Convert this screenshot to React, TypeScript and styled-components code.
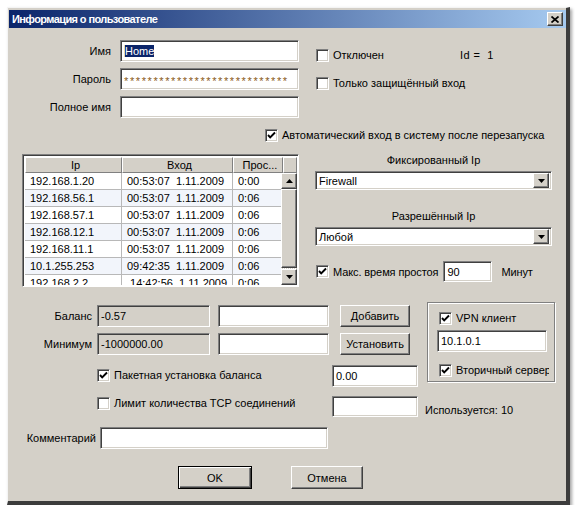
import React from 'react';
import styled, { createGlobalStyle, css } from 'styled-components';

const GlobalStyle = createGlobalStyle`
  html, body {
    margin: 0;
    background: #fff;
    font-family: "Liberation Sans", Arial, sans-serif;
    font-size: 11px;
    color: #000;
  }
`;

const sunken = css`
  box-sizing: border-box;
  border-style: solid;
  border-width: 1px;
  border-color: #808080 #fff #fff #808080;
  box-shadow: inset 1px 1px #404040, inset -1px -1px #d4d0c8;
`;

const raised = css`
  box-sizing: border-box;
  border-style: solid;
  border-width: 1px;
  border-color: #fff #404040 #404040 #fff;
  box-shadow: inset -1px -1px #808080, inset 1px 1px #d4d0c8;
  background: #d4d0c8;
`;

const Window = styled.div`
  box-sizing: border-box;
  margin: 7px 0 0 7px;
  width: 563px;
  height: 498px;
  background: #d4d0c8;
  border-style: solid;
  border-width: 1px 4px 4px 1px;
  border-color: #f4f4f4 #3c3c3c #3c3c3c #f4f4f4;
  padding: 2px 0 0 1px;
  box-shadow: 2px 2px 3px rgba(0, 0, 0, 0.35);
`;

const TitleBar = styled.div`
  height: 18px;
  display: flex;
  align-items: center;
  justify-content: space-between;
  padding: 0 3px;
  background: linear-gradient(to right, #0a246a, #a6caf0);
`;

const Title = styled.span`
  color: #fff;
  font-weight: bold;
  font-size: 11px;
  letter-spacing: -0.6px;
`;

const CloseButton = styled.div`
  ${raised};
  width: 16px;
  height: 14px;
  display: flex;
  align-items: center;
  justify-content: center;
`;

const Content = styled.div`
  padding-top: 12px;
`;

const TopSection = styled.div`
  display: flex;
`;

const FieldColumn = styled.div`
  display: flex;
  flex-direction: column;
  gap: 6px;
  width: 290px;
`;

const FieldRow = styled.div<{ $h?: number }>`
  display: flex;
  align-items: center;
  height: ${(p) => p.$h ?? 22}px;
`;

const FieldLabel = styled.span<{ $w: number; $gap: number }>`
  width: ${(p) => p.$w}px;
  margin-right: ${(p) => p.$gap}px;
  text-align: right;
  white-space: nowrap;
`;

const TextBox = styled.div<{ $w: number; $h?: number; $ro?: boolean; $ml?: number; $mt?: number }>`
  ${sunken};
  width: ${(p) => p.$w}px;
  height: ${(p) => p.$h ?? 22}px;
  margin-left: ${(p) => p.$ml ?? 0}px;
  margin-top: ${(p) => p.$mt ?? 0}px;
  background: ${(p) => (p.$ro ? '#d4d0c8' : '#fff')};
  padding: 0 3px;
  display: flex;
  align-items: center;
  white-space: nowrap;
  overflow: hidden;
  flex: none;
`;

const Selected = styled.span`
  background: #0a246a;
  color: #fff;
  border-left: 1px solid #e8d8a8;
`;

const Stars = styled.span`
  color: #8a5a20;
  letter-spacing: 1.6px;
  margin-top: 3px;
`;

const FlagColumn = styled.div`
  display: flex;
  flex-direction: column;
  gap: 14px;
  margin-left: 17px;
  padding-top: 8px;
`;

const FlagRow = styled.div`
  display: grid;
  grid-template-columns: 144px auto;
  align-items: center;
`;

const IdText = styled.span`
  white-space: pre;
  letter-spacing: 0.4px;
`;

const CheckLine = styled.label<{ $ml?: number; $mt?: number; $w?: number }>`
  display: flex;
  align-items: center;
  gap: 4px;
  height: 14px;
  margin-left: ${(p) => p.$ml ?? 0}px;
  margin-top: ${(p) => p.$mt ?? 0}px;
  white-space: nowrap;
  ${(p) =>
    p.$w !== undefined &&
    css`
      width: ${p.$w}px;
      overflow: hidden;
    `}
`;

const Box = styled.span`
  ${sunken};
  width: 13px;
  height: 13px;
  background: #fff;
  flex: none;
  display: flex;
  align-items: center;
  justify-content: center;
`;

const Check: React.FC<{ label: string; checked?: boolean; ml?: number; mt?: number; w?: number }> = ({
  label,
  checked,
  ml,
  mt,
  w,
}) => (
  <CheckLine $ml={ml} $mt={mt} $w={w}>
    <Box>
      {checked && (
        <svg width="9" height="9" viewBox="0 0 9 9">
          <polyline points="1,4 3.2,6.4 8,1.5" fill="none" stroke="#000" strokeWidth="1.9" />
        </svg>
      )}
    </Box>
    <span>{label}</span>
  </CheckLine>
);

const Middle = styled.div`
  display: flex;
  margin-top: 12px;
`;

const TableBox = styled.div`
  ${sunken};
  margin-left: 13px;
  width: 277px;
  height: 133px;
  background: #fff;
  display: flex;
  flex-direction: column;
  overflow: hidden;
  padding: 2px 1px 1px 2px;
  box-shadow: inset 1px 1px #404040;
`;

const HeadRow = styled.div`
  display: grid;
  grid-template-columns: 97px 111px 50px 1fr;
  height: 16px;
  flex: none;
`;

const HeadCell = styled.div`
  ${raised};
  border-color: #fff #808080 #808080 #fff;
  box-shadow: none;
  display: flex;
  align-items: center;
  justify-content: center;
  padding-left: 4px;
`;

const Body = styled.div`
  display: flex;
  flex: 1;
  min-height: 0;
`;

const Rows = styled.div`
  flex: 1;
  overflow: hidden;
`;

const DataRow = styled.div<{ $alt: boolean }>`
  display: grid;
  grid-template-columns: 97px 111px 50px;
  height: 17px;
  background: ${(p) => (p.$alt ? '#f2f5fb' : '#fff')};
`;

const DataCell = styled.div`
  box-sizing: border-box;
  border-right: 1px solid #b8b8b8;
  border-bottom: 1px solid #b8b8b8;
  padding-left: 5px;
  display: flex;
  align-items: center;
  white-space: pre;
`;

const ScrollBar = styled.div`
  width: 16px;
  display: flex;
  flex-direction: column;
  flex: none;
`;

const ScrollButton = styled.div<{ $h: number }>`
  ${raised};
  height: ${(p) => p.$h}px;
  flex: none;
  display: flex;
  align-items: center;
  justify-content: center;
`;

const ScrollTrack = styled.div`
  flex: 1;
  background: repeating-conic-gradient(#d4d0c8 0 25%, #fff 0 50%) 0 0 / 2px 2px;
`;

const SideColumn = styled.div`
  margin-left: 16px;
  width: 237px;
  display: flex;
  flex-direction: column;
`;

const Caption = styled.div<{ $mt: number }>`
  text-align: center;
  line-height: 13px;
  margin-top: ${(p) => p.$mt}px;
`;

const Combo = styled.div`
  ${sunken};
  margin-top: 4px;
  height: 19px;
  background: #fff;
  display: flex;
  align-items: center;
  padding: 2px;
`;

const ComboText = styled.span`
  flex: 1;
  padding-left: 1px;
`;

const ComboButton = styled.div`
  ${raised};
  width: 16px;
  height: 15px;
  display: flex;
  align-items: center;
  justify-content: center;
`;

const IdleRow = styled.div`
  display: flex;
  align-items: center;
  margin-top: 15px;
  height: 21px;
  letter-spacing: -0.1px;
`;

const Unit = styled.span`
  margin-left: 9px;
`;

const Lower = styled.div`
  display: grid;
  grid-template-columns: 409px 128px;
  column-gap: 9px;
  margin-top: 18px;
`;

const LowerLeft = styled.div`
  display: flex;
  flex-direction: column;
`;

const LowerRow = styled.div<{ $mt?: number; $h?: number; $top?: boolean }>`
  display: flex;
  align-items: ${(p) => (p.$top ? 'flex-start' : 'center')};
  height: ${(p) => p.$h ?? 22}px;
  margin-top: ${(p) => p.$mt ?? 0}px;
`;

const Button = styled.div<{ $w: number; $h?: number; $ml?: number; $default?: boolean }>`
  ${raised};
  width: ${(p) => p.$w}px;
  height: ${(p) => p.$h ?? 22}px;
  margin-left: ${(p) => p.$ml ?? 0}px;
  display: flex;
  align-items: center;
  justify-content: center;
  flex: none;
  ${(p) =>
    p.$default &&
    css`
      border-color: #000;
      box-shadow: inset 1px 1px #fff, inset -1px -1px #404040, inset -2px -2px #808080;
    `}
`;

const Spacer = styled.div`
  flex: 1;
`;

const LowerRight = styled.div`
  display: flex;
  flex-direction: column;
`;

const GroupBox = styled.div`
  box-sizing: border-box;
  margin-top: -3px;
  height: 80px;
  border: 1px solid #808080;
  box-shadow: inset 1px 1px #fff, 1px 1px #fff;
  padding: 8px 6px 0 11px;
  display: flex;
  flex-direction: column;
  overflow: hidden;
`;

const Used = styled.div`
  margin-top: 14px;
  height: 21px;
  padding-top: 8px;
  box-sizing: border-box;
  margin-left: -2px;
`;

const Footer = styled.div`
  display: flex;
  margin-top: 17px;
  padding-left: 169px;
`;

const Arrow: React.FC<{ dir: 'up' | 'down' }> = ({ dir }) => (
  <svg width="7" height="4" viewBox="0 0 7 4">
    <polygon points={dir === 'up' ? '3.5,0 7,4 0,4' : '0,0 7,0 3.5,4'} fill="#000" />
  </svg>
);

const rows = [
  ['192.168.1.20', '00:53:07  1.11.2009', '0:00'],
  ['192.168.56.1', '00:53:07  1.11.2009', '0:06'],
  ['192.168.57.1', '00:53:07  1.11.2009', '0:06'],
  ['192.168.12.1', '00:53:07  1.11.2009', '0:06'],
  ['192.168.11.1', '00:53:07  1.11.2009', '0:06'],
  ['10.1.255.253', '09:42:35  1.11.2009', '0:06'],
  ['192.168.2.2', ' 14:42:56  1.11.2009', '0:06'],
];

const App: React.FC = () => {
  return (
    <>
      <GlobalStyle />
      <Window>
        <TitleBar>
          <Title>Информация о пользователе</Title>
          <CloseButton>
            <svg width="8" height="7" viewBox="0 0 8 7">
              <path d="M0.5 0.5 L7.5 6.5 M7.5 0.5 L0.5 6.5" stroke="#000" strokeWidth="1.7" />
            </svg>
          </CloseButton>
        </TitleBar>
        <Content>
          <TopSection>
            <FieldColumn>
              <FieldRow>
                <FieldLabel $w={102} $gap={9}>Имя</FieldLabel>
                <TextBox $w={179}>
                  <Selected>Home</Selected>
                </TextBox>
              </FieldRow>
              <FieldRow>
                <FieldLabel $w={102} $gap={9}>Пароль</FieldLabel>
                <TextBox $w={179}>
                  <Stars>{'*'.repeat(28)}</Stars>
                </TextBox>
              </FieldRow>
              <FieldRow>
                <FieldLabel $w={102} $gap={9}>Полное имя</FieldLabel>
                <TextBox $w={179} />
              </FieldRow>
            </FieldColumn>
            <FlagColumn>
              <FlagRow>
                <Check label="Отключен" />
                <IdText>Id =  1</IdText>
              </FlagRow>
              <FlagRow>
                <Check label="Только защищённый вход" />
              </FlagRow>
            </FlagColumn>
          </TopSection>

          <Check label="Автоматический вход в систему после перезапуска" checked ml={256} mt={10} />

          <Middle>
            <TableBox>
              <HeadRow>
                <HeadCell>Ip</HeadCell>
                <HeadCell>Вход</HeadCell>
                <HeadCell>Прос...</HeadCell>
                <HeadCell />
              </HeadRow>
              <Body>
                <Rows>
                  {rows.map((r, i) => (
                    <DataRow key={i} $alt={i % 2 === 1}>
                      {r.map((c, j) => (
                        <DataCell key={j}>{c}</DataCell>
                      ))}
                    </DataRow>
                  ))}
                </Rows>
                <ScrollBar>
                  <ScrollButton $h={16}>
                    <Arrow dir="up" />
                  </ScrollButton>
                  <ScrollButton $h={79} />
                  <ScrollTrack />
                  <ScrollButton $h={16}>
                    <Arrow dir="down" />
                  </ScrollButton>
                </ScrollBar>
              </Body>
            </TableBox>

            <SideColumn>
              <Caption $mt={0}>Фиксированный Ip</Caption>
              <Combo>
                <ComboText>Firewall</ComboText>
                <ComboButton>
                  <Arrow dir="down" />
                </ComboButton>
              </Combo>
              <Caption $mt={20}>Разрешённый Ip</Caption>
              <Combo>
                <ComboText>Любой</ComboText>
                <ComboButton>
                  <Arrow dir="down" />
                </ComboButton>
              </Combo>
              <IdleRow>
                <Check label="Макс. время простоя" checked ml={1} />
                <TextBox $w={49} $h={21} $ml={5}>
                  90
                </TextBox>
                <Unit>Минут</Unit>
              </IdleRow>
            </SideColumn>
          </Middle>

          <Lower>
            <LowerLeft>
              <LowerRow>
                <FieldLabel $w={83} $gap={5}>Баланс</FieldLabel>
                <TextBox $w={113} $ro>
                  -0.57
                </TextBox>
                <TextBox $w={111} $ml={8} />
                <Button $w={70} $ml={11}>Добавить</Button>
              </LowerRow>
              <LowerRow $mt={6}>
                <FieldLabel $w={83} $gap={5}>Минимум</FieldLabel>
                <TextBox $w={113} $ro>
                  -1000000.00
                </TextBox>
                <TextBox $w={111} $ml={8} />
                <Button $w={70} $ml={11}>Установить</Button>
              </LowerRow>
              <LowerRow $mt={10} $top>
                <Check label="Пакетная установка баланса" checked ml={88} mt={3} />
                <Spacer />
                <TextBox $w={86}>0.00</TextBox>
              </LowerRow>
              <LowerRow $mt={9} $h={21} $top>
                <Check label="Лимит количества TCP соединений" ml={88} />
                <Spacer />
                <TextBox $w={86} $h={21} />
              </LowerRow>
            </LowerLeft>
            <LowerRight>
              <GroupBox>
                <Check label="VPN клиент" checked />
                <TextBox $w={110} $ml={-2} $mt={5}>
                  10.1.0.1
                </TextBox>
                <Check label="Вторичный сервер" checked mt={11} w={110} />
              </GroupBox>
              <Used>Используется: 10</Used>
            </LowerRight>
          </Lower>

          <LowerRow $mt={10}>
            <FieldLabel $w={87} $gap={4}>Комментарий</FieldLabel>
            <TextBox $w={228} />
          </LowerRow>

          <Footer>
            <Button $w={74} $h={23} $default>OK</Button>
            <Button $w={72} $h={23} $ml={39}>Отмена</Button>
          </Footer>
        </Content>
      </Window>
    </>
  );
};

export default App;
